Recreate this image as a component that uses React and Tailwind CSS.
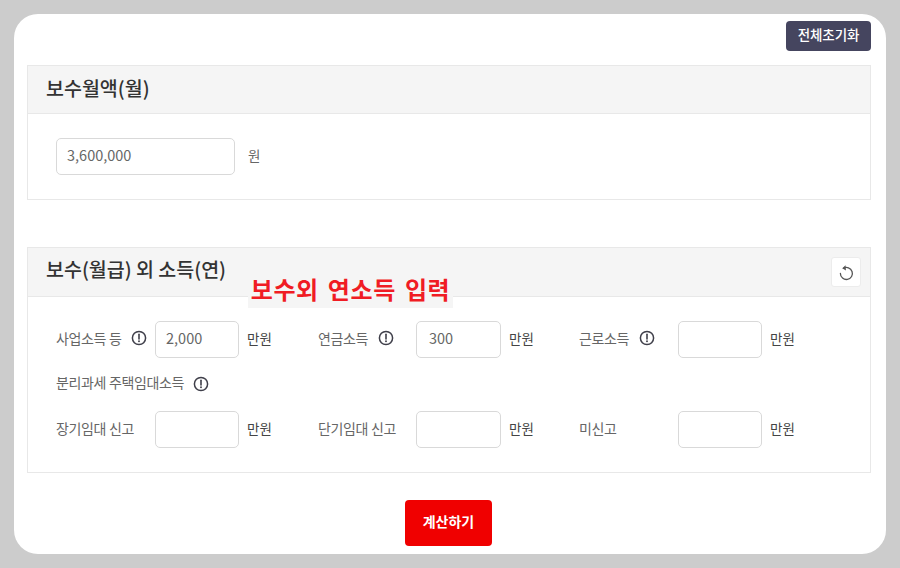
import React from "react";

const font = { fontFamily: '"Noto Sans CJK KR", "Noto Sans", sans-serif' };

function Info() {
  return (
    <svg width="16" height="16" viewBox="0 0 16 16" fill="none" className="shrink-0 block">
      <circle cx="8" cy="8" r="6.6" stroke="#3f3f4a" strokeWidth="1.5" />
      <path d="M8 4.2V9" stroke="#3f3f4a" strokeWidth="1.6" strokeLinecap="round" />
      <circle cx="8" cy="11.2" r="0.95" fill="#3f3f4a" />
    </svg>
  );
}

function Field({ label, value, info, labelW = "w-[99px]", inputClass = "w-[84px] pl-[10px]" }) {
  return (
    <div className="flex items-center h-[37px]">
      <div className={`flex items-center ${labelW} shrink-0 pb-[3px] text-[14px] tracking-[-0.35px] text-[#666]`}>
        <span>{label}</span>
        {info && <span className="ml-[10px]"><Info /></span>}
      </div>
      <div className={`${inputClass} h-[37px] shrink-0 rounded-[5px] border border-[#d9d9d9] bg-white flex items-center pb-[3px] text-[14.5px] text-[#666]`}>
        {value}
      </div>
      <span className="ml-2 pb-[3px] text-[13.5px] text-[#444]">만원</span>
    </div>
  );
}

export default function App() {
  return (
    <div className="w-[900px] h-[568px] bg-[#cccccc] p-[14px]" style={font}>
      <div className="relative w-[872px] h-[540px] bg-white rounded-[24px] pl-[13px] pr-[15px] pt-[7px] flex flex-col">
        <div className="flex justify-end h-[30px]">
          <button className="w-[85px] h-[30px] pb-[3px] rounded-[4px] bg-[#45455f] text-white text-[13.5px] font-medium tracking-[-0.1px]">전체초기화</button>
        </div>

        <section className="mt-[14px] h-[135px] border border-[#e8e8e8] flex flex-col">
          <div className="h-[48px] pb-[3px] bg-[#f5f5f5] border-b border-[#e8e8e8] flex items-center pl-[18px] text-[19.5px] font-medium text-[#333]">
            보수월액(월)
          </div>
          <div className="flex items-center pl-[28px] pt-[24px]">
            <div className="w-[179px] h-[37px] rounded-[5px] border border-[#d9d9d9] flex items-center pl-[10px] pb-[3px] text-[14.5px] text-[#666]">3,600,000</div>
            <span className="ml-[13px] pb-[3px] text-[13.5px] text-[#666]">원</span>
          </div>
        </section>

        <section className="mt-[47px] h-[226px] border border-[#e8e8e8] flex flex-col">
          <div className="h-[49px] shrink-0 bg-[#f5f5f5] border-b border-[#e8e8e8] flex items-center justify-between pl-[18px] pr-[9px]">
            <span className="pb-[6px] text-[19.5px] font-medium text-[#333]">보수(월급) 외 소득(연)</span>
            <span className="w-[30px] h-[30px] rounded-[3px] bg-white border border-[#ececec] flex items-center justify-center">
              <svg width="16" height="17" viewBox="0 0 16 17" fill="none" className="-ml-[1px]">
                <path d="M5.4 4.3A6 6 0 1 1 2.4 9.5" stroke="#555" strokeWidth="1.3" strokeLinecap="round" />
                <path d="M7.6 1.2 4.3 4.2l3.6 2.2z" fill="#555" />
              </svg>
            </span>
          </div>
          <div className="pl-[28px] pt-[24px]">
            <div className="grid grid-cols-[262px_261px_auto]">
              <Field label="사업소득 등" value="2,000" info />
              <Field label="연금소득" value="300" info labelW="w-[98px]" inputClass="w-[85px] pl-[12px]" />
              <Field label="근로소득" info />
            </div>
            <div className="mt-[15px] h-[22px] flex items-center text-[14px] tracking-[-0.35px] text-[#666]">
              <span className="pb-[3px]">분리과세 주택임대소득</span>
              <span className="ml-[9px]"><Info /></span>
            </div>
            <div className="mt-[16px] grid grid-cols-[262px_261px_auto]">
              <Field label="장기임대 신고" />
              <Field label="단기임대 신고" labelW="w-[98px]" inputClass="w-[85px] pl-[12px]" />
              <Field label="미신고" />
            </div>
          </div>
        </section>

        <div className="flex justify-center mt-[27px]">
          <button className="w-[87px] h-[46px] mr-[1px] pb-[3px] rounded-[4px] bg-[#f00000] text-white text-[14px] font-bold">계산하기</button>
        </div>

        <div className="absolute left-[234px] top-[261px] w-[205px] h-[33px] pb-[5px] bg-[#f5f5f5] flex items-center justify-center text-[24px] font-bold tracking-[0.6px] text-[#f01c24] whitespace-nowrap" style={{ wordSpacing: "3px" }}>
          보수외 연소득 입력
        </div>
      </div>
    </div>
  );
}
